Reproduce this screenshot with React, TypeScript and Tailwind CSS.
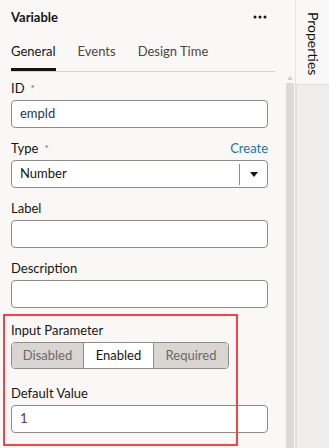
import { ReactNode } from "react";

function FieldLabel({ children, required, right }: { children: ReactNode; required?: boolean; right?: ReactNode }) {
  return (
    <div className="flex items-end justify-between h-4 leading-4 mb-[4px]">
      <span className="text-[13px] text-[#161513]">
        {children}
        {required && <span className="ml-[6px] text-[10px] align-top text-[#6f6c68]">*</span>}
      </span>
      {right}
    </div>
  );
}

function TextBox({ value, color = "#161513" }: { value?: string; color?: string }) {
  return (
    <div className="h-[28px] w-[257px] rounded-[4px] border border-[#8f8c88] bg-white px-[8px] flex items-center text-[13px]">
      <span style={{ color }}>{value}</span>
    </div>
  );
}

export default function App() {
  return (
    <div
      className="flex h-[448px] w-[329px] overflow-hidden bg-[#f9f8f6] text-[#161513]"
      style={{ fontFamily: 'Lato, "Noto Sans", sans-serif' }}
    >
      <div className="w-[286px] shrink-0 flex flex-col">
        <div className="flex items-center justify-between h-[34px] pl-[11px] pr-[19px] pt-px">
          <span className="text-[13px] font-bold">Variable</span>
          <svg width="14" height="4" viewBox="0 0 14 4" className="mt-[-2px]">
            <circle cx="2" cy="2" r="1.5" fill="#161513" />
            <circle cx="7" cy="2" r="1.5" fill="#161513" />
            <circle cx="12" cy="2" r="1.5" fill="#161513" />
          </svg>
        </div>
        <div className="ml-[11px] mr-[11px] flex h-[38px] items-end gap-[22px] border-b border-[#d8d6d3] text-[13px]">
          <div className="flex flex-col items-center">
            <span className="leading-4 mb-[9px]">General</span>
            <div className="h-[3px] w-full bg-[#161513]" />
          </div>
          <span className="leading-4 mb-[12px] text-[#4a4744]">Events</span>
          <span className="leading-4 mb-[12px] text-[#4a4744]">Design Time</span>
        </div>
        <div className="pl-[11px] pt-[8px] flex flex-col">
          <FieldLabel required>ID</FieldLabel>
          <TextBox value="empld" color="#1d3556" />
          <div className="h-[12px]" />
          <FieldLabel
            required
            right={<span className="text-[13px] text-[#1f74b2] mr-[18px]">Create</span>}
          >
            Type
          </FieldLabel>
          <div className="h-[28px] w-[257px] rounded-[4px] border border-[#8f8c88] bg-white flex items-center text-[13px]">
            <span className="flex-1 pl-[8px]">Number</span>
            <div className="h-[21px] w-px bg-[#8f8c88]" />
            <div className="w-[27px] flex justify-center">
              <svg width="8" height="5" viewBox="0 0 8 5">
                <path d="M0 0h8L4 5z" fill="#161513" />
              </svg>
            </div>
          </div>
          <div className="h-[12px]" />
          <FieldLabel>Label</FieldLabel>
          <TextBox />
          <div className="h-[12px]" />
          <FieldLabel>Description</FieldLabel>
          <TextBox />
          <div className="relative mt-[14px]">
            <div className="pointer-events-none absolute left-[-8px] top-[-8px] h-[132px] w-[235px] border-2 border-[#f5434a]" />
            <FieldLabel>Input Parameter</FieldLabel>
            <div className="flex h-[27px] w-[218px] rounded-[4px] border border-[#8f8c88] overflow-hidden text-[13px]">
              <div className="w-[72px] flex items-center justify-center bg-[#d8d5d2] text-[#6d6a66] border-r border-[#8f8c88]">
                Disabled
              </div>
              <div className="w-[70px] flex items-center justify-center bg-white text-[#161513] border-r border-[#8f8c88]">
                Enabled
              </div>
              <div className="flex-1 flex items-center justify-center bg-[#d8d5d2] text-[#6d6a66]">
                Required
              </div>
            </div>
            <div className="h-[16px]" />
            <FieldLabel>Default Value</FieldLabel>
            <TextBox value="1" color="#5a2c8c" />
          </div>
        </div>
      </div>
      <div className="w-[8px] shrink-0 flex flex-col items-center">
        <div className="h-[76px]" />
        <svg width="6" height="4" viewBox="0 0 6 4">
          <path d="M0 4h6L3 0z" fill="#d2d0cd" />
        </svg>
        <div className="mt-[3px] flex-1 w-full bg-[#dddbd8]" />
      </div>
      <div className="w-px shrink-0 bg-[#e4e2df] ml-[1px]" />
      <div className="flex-1 flex flex-col">
        <div className="h-[84px] flex justify-center pt-[12px]">
          <span
            className="text-[14px] text-[#161513] leading-none h-fit"
            style={{ writingMode: "vertical-rl" }}
          >
            Properties
          </span>
        </div>
        <div className="flex-1 bg-[#efeeec] border-t border-l border-[#e2e0dd]" />
      </div>
    </div>
  );
}
